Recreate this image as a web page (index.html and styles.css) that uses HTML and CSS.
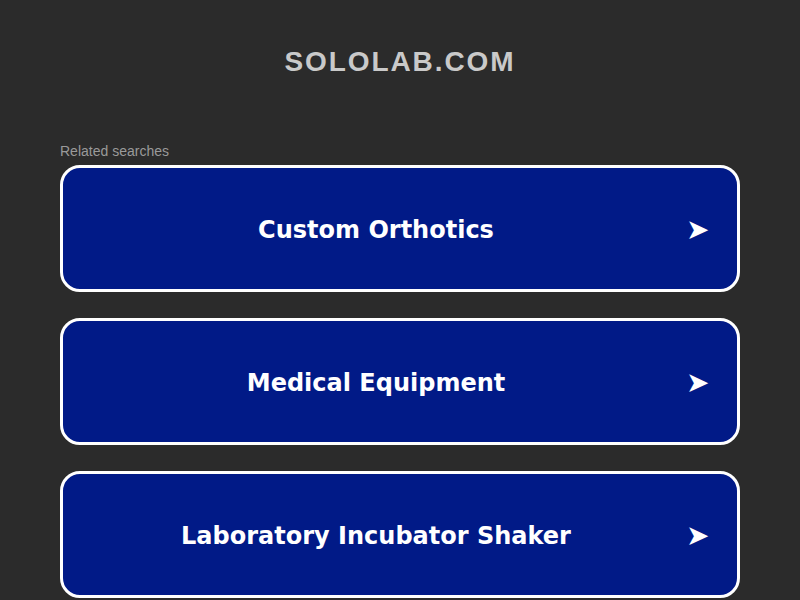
FILE: index.html
```html
<!DOCTYPE html>
<html>
<head>
<meta charset="utf-8">
<link rel="stylesheet" href="styles.css">
</head>
<body>
<div class="page">
  <header class="header"><h1 class="domain">SOLOLAB.COM</h1></header>
  <main class="content">
    <p class="label">Related searches</p>
    <ul class="links">
      <li><a class="link" href="#"><span class="link-text">Custom Orthotics</span><span class="arrow">➤</span></a></li>
      <li><a class="link" href="#"><span class="link-text">Medical Equipment</span><span class="arrow">➤</span></a></li>
      <li><a class="link" href="#"><span class="link-text">Laboratory Incubator Shaker</span><span class="arrow">➤</span></a></li>
    </ul>
  </main>
</div>
</body>
</html>
```
FILE: styles.css
```css
html, body {
  margin: 0;
  padding: 0;
  background: #2b2b2b;
  height: 100%;
  overflow: hidden;
}
.page {
  width: 680px;
  margin: 0 auto;
}
.header {
  height: 123px;
  display: flex;
  justify-content: center;
  align-items: center;
}
.domain {
  margin: 0;
  font-family: "Liberation Sans", Arial, sans-serif;
  font-weight: bold;
  font-size: 28px;
  letter-spacing: 1.9px;
  color: #c9c9c9;
}
.label {
  margin: 20px 0 6px;
  font-family: "Liberation Sans", Arial, sans-serif;
  font-size: 14px;
  color: #9a9a9a;
  line-height: 16px;
}
.links {
  list-style: none;
  margin: 0;
  padding: 0;
  display: flex;
  flex-direction: column;
  gap: 26px;
}
.link {
  display: flex;
  align-items: center;
  height: 119px;
  border: 3px solid #ffffff;
  border-radius: 20px;
  background: #011a87;
  color: #ffffff;
  text-decoration: none;
  padding: 2px 29px 0 20px;
  box-sizing: content-box;
  font-family: "DejaVu Sans", Verdana, sans-serif;
  font-weight: bold;
  font-size: 24px;
}
.link-text {
  flex: 1;
  text-align: center;
  margin-right: 17px;
}
.arrow {
  width: 22px;
  font-size: 28px;
  text-align: right;
}
```
